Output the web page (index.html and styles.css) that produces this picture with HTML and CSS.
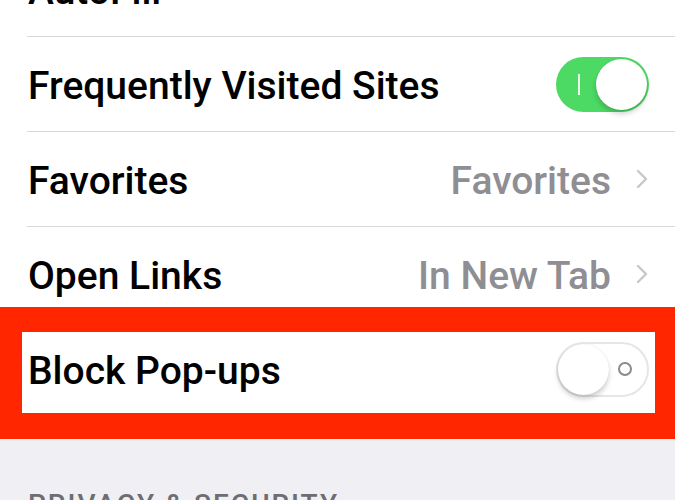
FILE: index.html
```html
<!DOCTYPE html>
<html>
<head>
<meta charset="utf-8">
<link rel="stylesheet" href="styles.css">
</head>
<body>
<div class="page">
  <ul class="list">
    <li class="row">
      <span class="label">AutoFill</span>
      <span class="chev"><svg width="12" height="20" viewBox="0 0 12 20"><path d="M2 2 L10 10 L2 18" fill="none" stroke="#c7c7cc" stroke-width="2.4" stroke-linecap="round" stroke-linejoin="round"/></svg></span>
    </li>
    <li class="row">
      <span class="label">Frequently Visited Sites</span>
      <span class="switch on"><span class="on-mark"></span><span class="knob"></span></span>
    </li>
    <li class="row">
      <span class="label">Favorites</span>
      <span class="value">Favorites</span>
      <span class="chev"><svg width="12" height="20" viewBox="0 0 12 20"><path d="M2 2 L10 10 L2 18" fill="none" stroke="#c7c7cc" stroke-width="2.4" stroke-linecap="round" stroke-linejoin="round"/></svg></span>
    </li>
    <li class="row">
      <span class="label">Open Links</span>
      <span class="value">In New Tab</span>
      <span class="chev"><svg width="12" height="20" viewBox="0 0 12 20"><path d="M2 2 L10 10 L2 18" fill="none" stroke="#c7c7cc" stroke-width="2.4" stroke-linecap="round" stroke-linejoin="round"/></svg></span>
    </li>
    <li class="row last">
      <span class="label">Block Pop-ups</span>
      <span class="switch off"><span class="knob"></span><span class="off-mark"></span></span>
    </li>
  </ul>
  <div class="section">
    <div class="section-title">PRIVACY &amp; SECURITY</div>
  </div>
  <div class="highlight"></div>
</div>
</body>
</html>
```

FILE: styles.css
```css
html, body {
  margin: 0;
  padding: 0;
  background: #efeff4;
}
.page {
  position: relative;
  width: 675px;
  height: 500px;
  overflow: hidden;
  font-family: Roboto, "Liberation Sans", sans-serif;
}
.list {
  list-style: none;
  margin: -58px 0 0 0;
  padding: 0 0 0 27px;
  background: #fff;
}
.row {
  display: flex;
  align-items: center;
  height: 95px;
  padding-right: 27px;
  border-bottom: 1px solid #d8d8dc;
  box-sizing: border-box;
}
.row.last {
  border-bottom: none;
}
.label {
  flex: 1;
  font-size: 39px;
  font-weight: 500;
  color: #000;
  padding-left: 1px;
  padding-top: 3px;
}
.value {
  font-size: 39px;
  font-weight: 500;
  color: #8e8e93;
  margin-right: 25px;
  padding-top: 3px;
}
.chev {
  display: flex;
  width: 12px;
}
.switch {
  position: relative;
  width: 93px;
  height: 55px;
  border-radius: 28px;
  box-sizing: border-box;
  display: block;
  margin-right: -1px;
}
.switch.on {
  background: #4cd964;
}
.switch.off {
  background: #fff;
  border: 2px solid #e6e6e6;
}
.knob {
  position: absolute;
  width: 51px;
  height: 51px;
  border-radius: 50%;
  background: #fff;
  box-shadow: 0 4px 5px rgba(0,0,0,0.18), 0 0 1px rgba(0,0,0,0.15);
}
.switch.on .knob {
  right: 2px;
  top: 2px;
}
.switch.off .knob {
  left: 0;
  top: 0;
}
.on-mark {
  position: absolute;
  left: 22px;
  top: 17px;
  width: 2px;
  height: 21px;
  background: rgba(255,255,255,0.85);
}
.off-mark {
  position: absolute;
  right: 15px;
  top: 18px;
  width: 14px;
  height: 14px;
  border: 2.5px solid #8a8a8f;
  border-radius: 50%;
  box-sizing: border-box;
}
.section {
  padding: 71px 0 0 28px;
}
.section-title {
  font-size: 28px;
  font-weight: 500;
  color: #6d6d72;
  letter-spacing: 2px;
}
.highlight {
  position: absolute;
  left: 0;
  top: 307px;
  width: 675px;
  height: 132px;
  box-sizing: border-box;
  border-style: solid;
  border-color: #ff2600;
  border-width: 25px 20px 26px 22px;
}
```
